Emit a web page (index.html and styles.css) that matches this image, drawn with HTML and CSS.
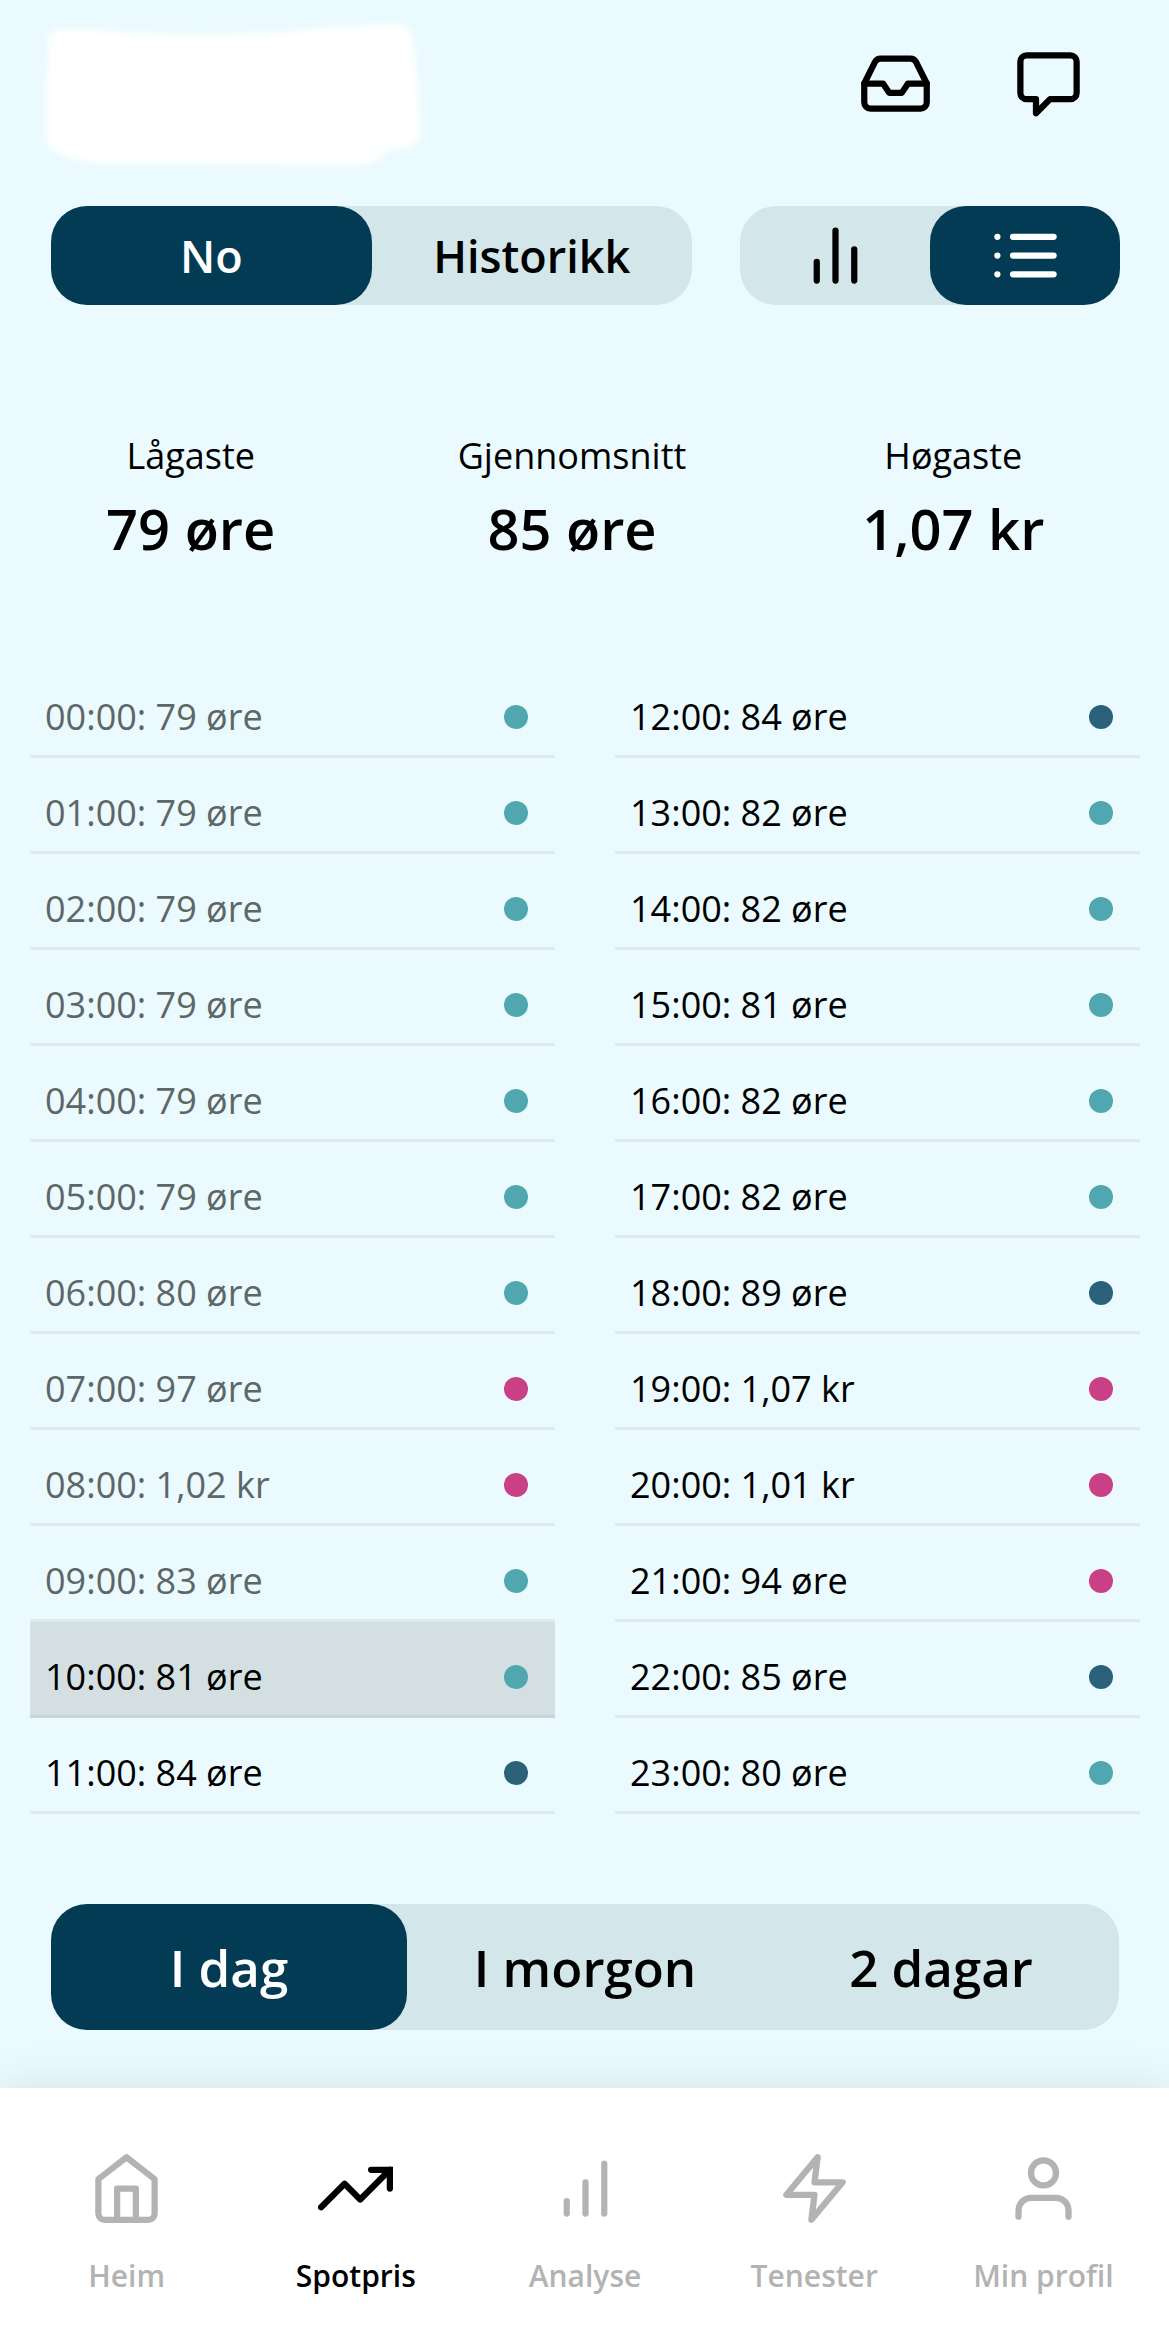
FILE: index.html
```html
<!DOCTYPE html>
<html lang="nn">
<head>
    <meta charset="UTF-8">
    <meta name="viewport" content="width=device-width, initial-scale=1.0">
    <title>Spotpris</title>
    <link rel="stylesheet" href="styles.css">
</head>
<body>
    <header class="header">
        <svg class="name-mask" viewBox="0 0 400 160" aria-hidden="true">
            <defs>
                <filter id="soft" x="-10%" y="-10%" width="120%" height="120%">
                    <feGaussianBlur stdDeviation="3"/>
                </filter>
            </defs>
            <path filter="url(#soft)" fill="#fff" d="M20 14 Q50 13 74 15 Q130 19 184 18 Q250 17 284 12 Q330 9 364 8 Q374 10 378 28 Q383 70 383 124 Q378 132 351 134 Q345 149 318 149 L60 147 Q30 142 18 135 Q10 130 10 118 L12 24 Q13 15 20 14z"/>
        </svg>
        <div class="header-actions">
            <button class="icon-button" aria-label="Innboks">
                <svg class="icon" viewBox="0 0 24 24">
                    <path d="M22 12h-6l-2 3h-4l-2-3H2"/>
                    <path d="M5.45 5.11 2 12v6a2 2 0 0 0 2 2h16a2 2 0 0 0 2-2v-6l-3.45-6.89A2 2 0 0 0 16.76 4H7.24a2 2 0 0 0-1.79 1.11z"/>
                </svg>
            </button>
            <button class="icon-button" aria-label="Meldingar">
                <svg class="icon" viewBox="0 0 24 24">
                    <path d="M5 3h14a2 2 0 0 1 2 2v10a2 2 0 0 1-2 2h-6.500L8 21.500V17H5a2 2 0 0 1-2-2V5a2 2 0 0 1 2-2z"/>
                </svg>
            </button>
        </div>
    </header>

    <main>
        <div class="toggles">
            <div class="tabs tabs-period">
                <button class="tab active">No</button>
                <button class="tab">Historikk</button>
            </div>
            <div class="tabs tabs-view">
                <button class="tab" aria-label="Graf">
                    <svg class="icon" viewBox="0 0 24 24"><path d="M6 20v-6M12 20V4M18 20V10"/></svg>
                </button>
                <button class="tab active" aria-label="Liste">
                    <svg class="icon" viewBox="0 0 24 24"><path d="M8 6h13M8 12h13M8 18h13M3 6h.01M3 12h.01M3 18h.01"/></svg>
                </button>
            </div>
        </div>

        <section class="stats">
            <div class="stat">
                <div class="stat-label">Lågaste</div>
                <div class="stat-value">79 øre</div>
            </div>
            <div class="stat">
                <div class="stat-label">Gjennomsnitt</div>
                <div class="stat-value">85 øre</div>
            </div>
            <div class="stat">
                <div class="stat-label">Høgaste</div>
                <div class="stat-value">1,07 kr</div>
            </div>
        </section>

        <section class="prices">
            <ul class="price-list">
                <li class="past">00:00: 79 øre<span class="dot low"></span></li>
                <li class="past">01:00: 79 øre<span class="dot low"></span></li>
                <li class="past">02:00: 79 øre<span class="dot low"></span></li>
                <li class="past">03:00: 79 øre<span class="dot low"></span></li>
                <li class="past">04:00: 79 øre<span class="dot low"></span></li>
                <li class="past">05:00: 79 øre<span class="dot low"></span></li>
                <li class="past">06:00: 80 øre<span class="dot low"></span></li>
                <li class="past">07:00: 97 øre<span class="dot high"></span></li>
                <li class="past">08:00: 1,02 kr<span class="dot high"></span></li>
                <li class="past">09:00: 83 øre<span class="dot low"></span></li>
                <li class="current">10:00: 81 øre<span class="dot low"></span></li>
                <li>11:00: 84 øre<span class="dot medium"></span></li>
            </ul>
            <ul class="price-list">
                <li>12:00: 84 øre<span class="dot medium"></span></li>
                <li>13:00: 82 øre<span class="dot low"></span></li>
                <li>14:00: 82 øre<span class="dot low"></span></li>
                <li>15:00: 81 øre<span class="dot low"></span></li>
                <li>16:00: 82 øre<span class="dot low"></span></li>
                <li>17:00: 82 øre<span class="dot low"></span></li>
                <li>18:00: 89 øre<span class="dot medium"></span></li>
                <li>19:00: 1,07 kr<span class="dot high"></span></li>
                <li>20:00: 1,01 kr<span class="dot high"></span></li>
                <li>21:00: 94 øre<span class="dot high"></span></li>
                <li>22:00: 85 øre<span class="dot medium"></span></li>
                <li>23:00: 80 øre<span class="dot low"></span></li>
            </ul>
        </section>

        <div class="tabs tabs-day">
            <button class="tab active">I dag</button>
            <button class="tab">I morgon</button>
            <button class="tab">2 dagar</button>
        </div>
    </main>

    <nav class="bottom-nav">
        <a href="#heim">
            <svg class="icon" viewBox="0 0 24 24"><path d="M3 9l9-7 9 7v11a2 2 0 0 1-2 2H5a2 2 0 0 1-2-2z"/><path d="M9 22V12h6v10"/></svg>
            Heim
        </a>
        <a href="#spotpris" class="active">
            <svg class="icon" viewBox="0 0 24 24"><path d="M23 6l-9.500 9.500-5-5L1 18"/><path stroke-linejoin="miter" d="M17 6h6v6"/></svg>
            Spotpris
        </a>
        <a href="#analyse">
            <svg class="icon" viewBox="0 0 24 24"><path d="M6 20v-4M12 20V10M18 20V4"/></svg>
            Analyse
        </a>
        <a href="#tenester">
            <svg class="icon" viewBox="0 0 24 24"><path d="M13 2 3 14h9l-1 8 10-12h-9z"/></svg>
            Tenester
        </a>
        <a href="#profil">
            <svg class="icon" viewBox="0 0 24 24"><path d="M20 21v-2a4 4 0 0 0-4-4H8a4 4 0 0 0-4 4v2"/><circle cx="12" cy="7" r="4"/></svg>
            Min profil
        </a>
    </nav>
</body>
</html>
```

FILE: styles.css
```css
* {
    box-sizing: border-box;
}

body {
    margin: 0;
    min-height: 100vh;
    display: flex;
    flex-direction: column;
    font-family: 'Open Sans', sans-serif;
    font-size: 36px;
    line-height: 48px;
    color: #000;
    background-color: #eafafe;
}

button {
    padding: 0;
    border: none;
    background: none;
    color: inherit;
    font: inherit;
    cursor: pointer;
}

.icon {
    display: block;
    width: 75px;
    height: 75px;
    fill: none;
    stroke: currentColor;
    stroke-width: 2;
    stroke-linecap: round;
    stroke-linejoin: round;
}

.header {
    display: flex;
    justify-content: space-between;
    align-items: flex-start;
    padding: 16px 83px 30px 36px;
}

.name-mask {
    width: 400px;
    height: 160px;
}

.header-actions {
    display: flex;
    gap: 78px;
    padding-top: 30px;
}

/* Tabs */
.tabs {
    display: flex;
    border-radius: 36px;
    background-color: #d3e6e9;
}

.tab {
    flex: 1;
    display: flex;
    align-items: center;
    justify-content: center;
    border-radius: 36px;
    font-weight: 600;
}

    .tab.active {
        background-color: #033b55;
        color: white;
    }

.toggles {
    display: flex;
    gap: 48px;
    padding: 0 49px 0 51px;
}

    .toggles .tabs {
        height: 99px;
        font-size: 45px;
    }

.tabs-period {
    flex: 641;
}

.tabs-view {
    flex: 380;
}

.tabs-day {
    height: 126px;
    margin: 90px 50px 58px 51px;
    font-size: 51px;
}

/* Lowest, average and highest price */
.stats {
    display: flex;
    padding: 127px 25px 98px 0;
    text-align: center;
}

.stat {
    flex: 1;
}

.stat-value {
    margin-top: 12px;
    font-size: 56px;
    line-height: 72px;
    font-weight: 600;
}

/* Price per hour */
.prices {
    display: grid;
    grid-template-columns: 1fr 1fr;
    gap: 60px;
    padding: 0 29px 0 30px;
}

.price-list {
    margin: 0;
    padding: 0;
    list-style: none;
}

    .price-list li {
        display: flex;
        align-items: center;
        justify-content: space-between;
        padding: 31px 27px 14px 15px;
        border-bottom: 3px solid #dfeced;
    }

    .price-list .past {
        color: #5d6767;
    }

    .price-list .current {
        background-color: #d3dfe0;
        border-color: #c8d4d5;
    }

.dot {
    width: 24px;
    height: 24px;
    border-radius: 50%;
}

.low {
    background-color: #51a7af;
}

.medium {
    background-color: #2b6279;
}

.high {
    background-color: #c94087;
}

/* Bottom navigation */
.bottom-nav {
    display: flex;
    margin-top: auto;
    padding: 63px 11px 37px 12px;
    background-color: white;
    box-shadow: 0 0 45px rgba(0, 0, 0, 0.1);
}

    .bottom-nav a {
        flex: 1;
        display: flex;
        flex-direction: column;
        align-items: center;
        gap: 30px;
        font-size: 30px;
        line-height: 40px;
        font-weight: 600;
        color: #b3b3b3;
        text-decoration: none;
    }

    .bottom-nav .active {
        color: #000;
    }
```
